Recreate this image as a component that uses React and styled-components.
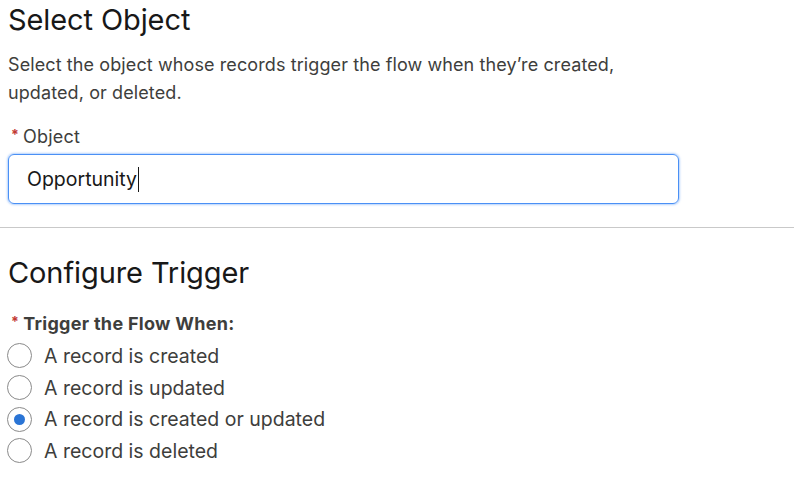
import styled, { createGlobalStyle } from 'styled-components';

const GlobalStyle = createGlobalStyle`
  html, body {
    margin: 0;
    padding: 0;
    background: #ffffff;
  }
  body {
    font-family: Inter, 'Liberation Sans', sans-serif;
    color: #181818;
  }
`;

const Page = styled.main`
  width: 804px;
  height: 478px;
  overflow: hidden;
  background: #ffffff;
`;

const Section = styled.section`
  padding: ${(p) => p.$pad || '0 8px'};
`;

const Heading = styled.h2`
  margin: 0;
  font-size: 29px;
  font-weight: 400;
  line-height: 40px;
  color: #181818;
  letter-spacing: -0.1px;
`;

const Description = styled.p`
  margin: 11px 0 0;
  width: 630px;
  font-size: 18px;
  letter-spacing: 0.1px;
  line-height: 28px;
  color: #3e3e3c;
`;

const Label = styled.div`
  display: flex;
  align-items: center;
  gap: 4px;
  font-size: 18px;
  letter-spacing: ${(p) => (p.$bold ? '0.3px' : '0.2px')};
  line-height: 24px;
  color: #3e3e3c;
  font-weight: ${(p) => (p.$bold ? 700 : 400)};
  margin-top: ${(p) => p.$top || '0'};
`;

const Required = styled.span`
  color: #c23934;
  font-size: 14px;
  font-weight: 700;
  margin-left: 3px;
  margin-top: -4px;
`;

const InputBox = styled.div`
  margin-top: 5px;
  width: 671px;
  height: 50px;
  box-sizing: border-box;
  border: 1px solid #4a90f5;
  border-radius: 6px;
  box-shadow: 0 0 2px 1px rgba(90, 156, 248, 0.45);
  display: flex;
  align-items: center;
  padding-left: 18px;
  font-size: 19.5px;
  color: #181818;
`;

const Caret = styled.span`
  display: inline-block;
  width: 1px;
  height: 25px;
  background: #181818;
  margin-left: 1px;
`;

const Divider = styled.hr`
  margin: 23px 0 0;
  width: 794px;
  border: 0;
  border-top: 1px solid #c9c9c9;
`;

const RadioList = styled.div`
  display: flex;
  flex-direction: column;
  margin-top: 4px;
`;

const RadioRow = styled.label`
  display: flex;
  align-items: center;
  height: 31.7px;
  gap: 12px;
  font-size: 19.5px;
  color: #3e3e3c;
`;

const RadioCircle = styled.span`
  width: 25px;
  height: 25px;
  box-sizing: border-box;
  border-radius: 50%;
  border: 1px solid #8a8a8a;
  display: flex;
  align-items: center;
  justify-content: center;
  margin-left: -1px;
  &::after {
    content: '';
    width: 11px;
    height: 11px;
    border-radius: 50%;
    background: ${(p) => (p.$checked ? '#2a74d5' : 'transparent')};
  }
`;

const options = [
  { label: 'A record is created', checked: false },
  { label: 'A record is updated', checked: false },
  { label: 'A record is created or updated', checked: true },
  { label: 'A record is deleted', checked: false },
];

export default function App() {
  return (
    <Page>
      <GlobalStyle />
      <Section $pad="0 8px">
        <Heading>Select Object</Heading>
        <Description>
          Select the object whose records trigger the flow when they’re created, updated, or deleted.
        </Description>
        <Label $top="18px">
          <Required>*</Required>Object
        </Label>
        <InputBox>
          Opportunity<Caret />
        </InputBox>
      </Section>
      <Divider />
      <Section $pad="25px 8px 0">
        <Heading>Configure Trigger</Heading>
        <Label $bold $top="19px">
          <Required>*</Required>Trigger the Flow When:
        </Label>
        <RadioList>
          {options.map((o) => (
            <RadioRow key={o.label}>
              <RadioCircle $checked={o.checked} />
              {o.label}
            </RadioRow>
          ))}
        </RadioList>
      </Section>
    </Page>
  );
}
